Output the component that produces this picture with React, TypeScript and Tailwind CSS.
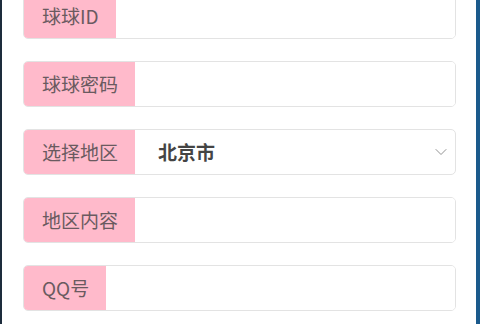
import { ChevronDown } from "lucide-react";

const Field = ({ label }: { label: string }) => (
  <div className="flex h-[46px] rounded-[5px] border border-[#e3e3e3] bg-white overflow-hidden">
    <div className="flex items-center bg-[#ffbacb] pl-[18px] pr-[17px] text-[19px] text-[#6a5a60] whitespace-nowrap">
      {label}
    </div>
    <input className="flex-1 min-w-0 bg-white outline-none px-3" />
  </div>
);

export default function App() {
  return (
    <div
      className="h-[324px] w-[480px] overflow-hidden bg-white border-l-2 border-l-[#1d2c3c] border-r-4 border-r-[#1b5a8c]"
      style={{ fontFamily: '"Noto Sans CJK SC", "Noto Sans", sans-serif' }}
    >
      <div className="mt-[-7px] pl-[21px] pr-[20px] flex flex-col gap-[22px]">
        <Field label="球球ID" />
        <Field label="球球密码" />
        {/* region select */}
        <div className="flex h-[46px] rounded-[5px] border border-[#e3e3e3] bg-white overflow-hidden">
          <div className="flex items-center bg-[#ffbacb] pl-[18px] pr-[17px] text-[19px] text-[#6a5a60] whitespace-nowrap">
            选择地区
          </div>
          <div className="flex flex-1 items-center justify-between pl-[23px] pr-[4px]">
            <span className="text-[19px] font-bold text-[#444]">北京市</span>
            <ChevronDown className="w-[20px] h-[20px] text-[#888]" strokeWidth={1.1} />
          </div>
        </div>
        <Field label="地区内容" />
        <Field label="QQ号" />
      </div>
    </div>
  );
}
